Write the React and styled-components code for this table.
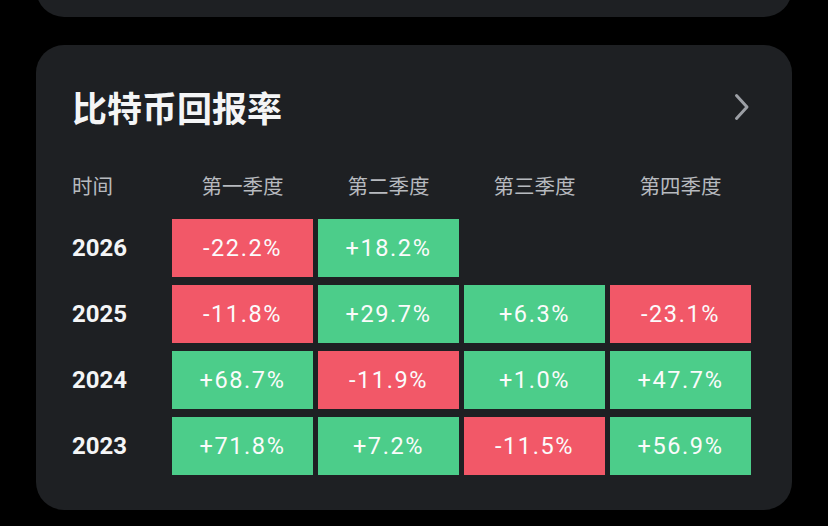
import React from "react";
import styled, { createGlobalStyle } from "styled-components";

const Global = createGlobalStyle`
  html, body { margin: 0; padding: 0; background: #000; }
  body { font-family: Roboto, "Noto Sans CJK SC", sans-serif; overflow: hidden; }
`;

const Page = styled.div`
  width: 828px;
  height: 526px;
  overflow: hidden;
  display: flex;
  flex-direction: column;
  align-items: center;
  gap: 28px;
  background: #000;
`;

const TopCard = styled.div`
  width: 756px;
  height: 60px;
  margin-top: -43px;
  flex-shrink: 0;
  background: #1e2023;
  border-radius: 28px;
`;

const Card = styled.section`
  width: 756px;
  box-sizing: border-box;
  flex-shrink: 0;
  background: #1e2023;
  border-radius: 28px;
  padding: 42px 41px 35px 36px;
  display: flex;
  flex-direction: column;
`;

const TitleRow = styled.div`
  display: flex;
  align-items: center;
  justify-content: space-between;
  height: 40px;
`;

const Title = styled.h2`
  margin: 0;
  font-family: "Noto Sans CJK SC", sans-serif;
  font-weight: 700;
  font-size: 35px;
  line-height: 40px;
  color: #f4f5f6;
  letter-spacing: 0px;
`;

const Chevron = styled.svg`
  width: 16px;
  height: 28px;
  margin-right: 1px;
  display: block;
`;

const Grid = styled.div`
  display: grid;
  grid-template-columns: 95px repeat(4, 141px);
  column-gap: 5px;
  row-gap: 8px;
  grid-auto-rows: 58px;
`;

const HeaderGrid = styled(Grid)`
  grid-auto-rows: 30px;
  margin-top: 43px;
  margin-bottom: 19px;
`;

const HeadCell = styled.div`
  font-family: "Noto Sans CJK SC", sans-serif;
  font-size: 20.5px;
  line-height: 30px;
  color: #b7babf;
  text-align: ${(p) => (p.$left ? "left" : "center")};
`;

const Year = styled.div`
  font-family: Roboto, sans-serif;
  font-weight: 700;
  font-size: 24px;
  color: #f4f5f6;
  display: flex;
  align-items: center;
`;

const Cell = styled.div`
  background: ${(p) => (p.$up ? "#4ccd8a" : "#f25868")};
  color: #fbfbfb;
  font-family: Roboto, sans-serif;
  font-size: 23.5px;
  letter-spacing: 1.6px;
  display: flex;
  align-items: center;
  justify-content: center;
`;

const Empty = styled.div``;

const headers = ["第一季度", "第二季度", "第三季度", "第四季度"];

const data = [
  ["2026", ["-22.2%", "+18.2%", null, null]],
  ["2025", ["-11.8%", "+29.7%", "+6.3%", "-23.1%"]],
  ["2024", ["+68.7%", "-11.9%", "+1.0%", "+47.7%"]],
  ["2023", ["+71.8%", "+7.2%", "-11.5%", "+56.9%"]],
];

export default function App() {
  return (
    <>
      <Global />
      <Page>
        <TopCard />
        <Card>
          <TitleRow>
            <Title>比特币回报率</Title>
            <Chevron viewBox="0 0 16 28">
              <polyline
                points="2.5,2.5 13,14 2.5,25.5"
                fill="none"
                stroke="#9c9fa5"
                strokeWidth="3"
                strokeLinecap="round"
                strokeLinejoin="round"
              />
            </Chevron>
          </TitleRow>
          <HeaderGrid>
            <HeadCell $left>时间</HeadCell>
            {headers.map((h) => (
              <HeadCell key={h}>{h}</HeadCell>
            ))}
          </HeaderGrid>
          <Grid>
            {data.map(([year, vals]) => (
              <React.Fragment key={year}>
                <Year>{year}</Year>
                {vals.map((v, i) =>
                  v ? (
                    <Cell key={i} $up={v.startsWith("+")}>
                      {v}
                    </Cell>
                  ) : (
                    <Empty key={i} />
                  )
                )}
              </React.Fragment>
            ))}
          </Grid>
        </Card>
      </Page>
    </>
  );
}
